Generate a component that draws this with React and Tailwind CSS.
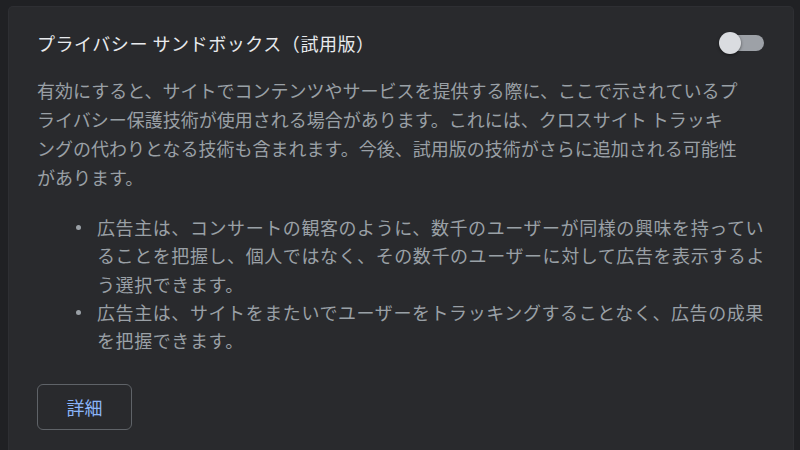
export default function App() {
  const font = { fontFamily: '"Noto Sans CJK JP", "Noto Sans", sans-serif' };

  const bullets = [
    [
      "広告主は、コンサートの観客のように、数千のユーザーが同様の興味を持ってい",
      "ることを把握し、個人ではなく、その数千のユーザーに対して広告を表示するよ",
      "う選択できます。",
    ],
    ["広告主は、サイトをまたいでユーザーをトラッキングすることなく、広告の成果", "を把握できます。"],
  ];

  return (
    <div className="h-[450px] w-[800px] overflow-hidden bg-[#202124] pl-[9px] pr-[7px] pt-[7px]" style={font}>
      <div className="h-[460px] rounded-t-[4px] bg-[#292a2d] px-[28px] pt-[24px] shadow-[0_0_0_1px_#2e2f33]">
        {/* header row */}
        <div className="flex h-[24px] items-center justify-between">
          <h2 className="text-[18px] font-normal leading-[24px] tracking-[0.55px] text-[#e8eaed]">
            プライバシー サンドボックス（試用版）
          </h2>
          <div className="relative mr-[1px] h-[22px] w-[45px]">
            <div className="absolute left-[3px] right-0 top-[3px] h-[16px] rounded-full bg-[#9da1a7]" />
            <div className="absolute left-0 top-0 h-[22px] w-[22px] rounded-full bg-[#dadce0] shadow-[0_1px_3px_rgba(0,0,0,0.5)]" />
          </div>
        </div>

        <p className="mt-[21px] whitespace-nowrap text-[18px] leading-[29px] text-[#9aa0a6]">
          有効にすると、サイトでコンテンツやサービスを提供する際に、ここで示されているプ
          <br />
          ライバシー保護技術が使用される場合があります。これには、クロスサイト トラッキ
          <br />
          ングの代わりとなる技術も含まれます。今後、試用版の技術がさらに追加される可能性
          <br />
          があります。
        </p>

        <ul className="mt-[21px] pl-[38px] text-[18px] leading-[28.3px] tracking-[0.58px] text-[#9aa0a6]">
          {bullets.map((lines, i) => (
            <li key={i} className="flex">
              <span className="flex h-[28.3px] w-[22px] shrink-0 items-center pl-[1px]">
                <span className="h-[5px] w-[5px] rounded-full bg-[#9aa0a6]" />
              </span>
              <span className="whitespace-nowrap">
                {lines.map((l, j) => (
                  <span key={j}>
                    {l}
                    {j < lines.length - 1 && <br />}
                  </span>
                ))}
              </span>
            </li>
          ))}
        </ul>

        <button className="mt-[30px] flex h-[46px] w-[95px] items-center justify-center rounded-[6px] border border-[#5f6368] text-[18px] text-[#8ab4f8]">
          詳細
        </button>
      </div>
    </div>
  );
}
